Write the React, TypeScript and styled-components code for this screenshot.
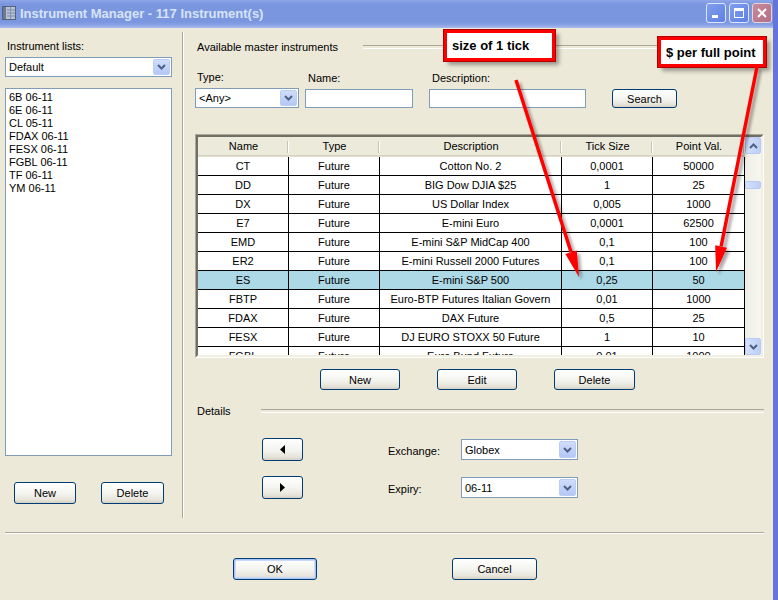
import React from 'react';
import styled, { createGlobalStyle } from 'styled-components';

const GlobalStyle = createGlobalStyle`
  html, body {
    margin: 0;
    padding: 0;
    background: #ece9d8;
    overflow: hidden;
  }
  body {
    font-family: "Liberation Sans", Arial, sans-serif;
    font-size: 11px;
    color: #000;
  }
  * {
    box-sizing: border-box;
  }
`;

const COLS = '91px 91px 182px 91px 92px';

const instruments = [
  ['CT', 'Future', 'Cotton No. 2', '0,0001', '50000'],
  ['DD', 'Future', 'BIG Dow DJIA $25', '1', '25'],
  ['DX', 'Future', 'US Dollar Index', '0,005', '1000'],
  ['E7', 'Future', 'E-mini Euro', '0,0001', '62500'],
  ['EMD', 'Future', 'E-mini S&P MidCap 400', '0,1', '100'],
  ['ER2', 'Future', 'E-mini Russell 2000 Futures', '0,1', '100'],
  ['ES', 'Future', 'E-mini S&P 500', '0,25', '50'],
  ['FBTP', 'Future', 'Euro-BTP Futures Italian Govern', '0,01', '1000'],
  ['FDAX', 'Future', 'DAX Future', '0,5', '25'],
  ['FESX', 'Future', 'DJ EURO STOXX 50 Future', '1', '10'],
  ['FGBL', 'Future', 'Euro Bund Future', '0,01', '1000'],
];

const lists = ['6B 06-11', '6E 06-11', 'CL 05-11', 'FDAX 06-11', 'FESX 06-11', 'FGBL 06-11', 'TF 06-11', 'YM 06-11'];

const Window = styled.div`
  position: relative;
  width: 778px;
  height: 600px;
  background: #ece9d8;
  border-right: 5px solid #6474d9;
  display: flex;
  flex-direction: column;
  overflow: hidden;
`;

const TitleBar = styled.div`
  height: 28px;
  flex: none;
  display: flex;
  align-items: center;
  padding: 0 1px 2px 2px;
  background: linear-gradient(
    to bottom,
    #8fa7e7 0,
    #7a96df 4px,
    #7a96df 22px,
    #8aa3e4 25px,
    #a9bcec 28px
  );
`;

const TitleText = styled.span`
  margin-left: 4px;
  font: bold 13px "Liberation Sans", Arial, sans-serif;
  color: #d8e3f8;
  white-space: nowrap;
`;

const CaptionButtons = styled.div`
  margin-left: auto;
  display: flex;
  gap: 3px;
`;

const CaptionButton = styled.div<{ $close?: boolean }>`
  width: 20px;
  height: 20px;
  border: 1px solid ${(p) => (p.$close ? '#e6d3da' : '#dde6fb')};
  border-radius: 3px;
  background: ${(p) =>
    p.$close
      ? 'linear-gradient(135deg, #c98a9c, #b17084)'
      : 'linear-gradient(135deg, #7f9ff0, #5f80e0)'};
  display: flex;
  align-items: center;
  justify-content: center;
`;

const Body = styled.div`
  height: 504px;
  flex: none;
  display: flex;
`;

const LeftPane = styled.div`
  width: 182px;
  padding-left: 5px;
  display: flex;
  flex-direction: column;
`;

const Label = styled.div<{ $mt?: number; $pl?: number }>`
  margin-top: ${(p) => p.$mt ?? 0}px;
  padding-left: ${(p) => p.$pl ?? 0}px;
  height: 13px;
  line-height: 13px;
  white-space: nowrap;
`;

const ComboBox = styled.div<{ $w: number; $h?: number; $mt?: number }>`
  width: ${(p) => p.$w}px;
  height: ${(p) => p.$h ?? 20}px;
  margin-top: ${(p) => p.$mt ?? 0}px;
  border: 1px solid #7f9db9;
  background: #fff;
  display: flex;
  align-items: center;
  padding: 1px 1px 1px 3px;
`;

const ComboValue = styled.span`
  flex: 1;
  white-space: nowrap;
`;

const DropButton = styled.div`
  width: 17px;
  height: 100%;
  border: 1px solid #bccdf5;
  border-radius: 2px;
  background: linear-gradient(to bottom, #d0dcfb, #b4c8f6);
  display: flex;
  align-items: center;
  justify-content: center;
`;

const TextBox = styled.div<{ $w: number }>`
  width: ${(p) => p.$w}px;
  height: 19px;
  border: 1px solid #7f9db9;
  background: #fff;
`;

const ListBox = styled.div`
  margin-top: 11px;
  width: 167px;
  height: 368px;
  border: 1px solid #7f9db9;
  background: #fff;
  padding: 2px 3px;
`;

const ListItem = styled.div`
  height: 13px;
  line-height: 13px;
  white-space: nowrap;
`;

const ButtonRow = styled.div<{ $mt: number; $pl: number; $gap: number }>`
  margin-top: ${(p) => p.$mt}px;
  padding-left: ${(p) => p.$pl}px;
  display: flex;
  gap: ${(p) => p.$gap}px;
`;

const XpButton = styled.button<{ $w: number; $h?: number; $default?: boolean }>`
  width: ${(p) => p.$w}px;
  height: ${(p) => p.$h ?? 22}px;
  padding: 0;
  border: 1px solid #003c74;
  border-radius: 3px;
  background: linear-gradient(to bottom, #ffffff 0%, #f3f3ee 55%, #e6e4da 85%, #d6d0c5 100%);
  font: 11px "Liberation Sans", Arial, sans-serif;
  color: #000;
  display: flex;
  align-items: center;
  justify-content: center;
  box-shadow: ${(p) =>
    p.$default ? 'inset 0 0 0 1px #a9c4f4, inset 0 0 0 2px #c9dafa' : 'none'};
`;

const VSep = styled.div`
  margin-top: 4px;
  width: 2px;
  height: 486px;
  border-left: 1px solid #aca899;
  border-right: 1px solid #fff;
`;

const RightPane = styled.div`
  flex: 1;
  padding-left: 11px;
  display: flex;
  flex-direction: column;
`;

const GroupHeader = styled.div<{ $mt: number; $line: number }>`
  margin-top: ${(p) => p.$mt}px;
  width: 569px;
  height: 13px;
  display: flex;
  align-items: center;
  padding-left: 2px;

  &::after {
    content: '';
    margin-left: auto;
    width: ${(p) => p.$line}px;
    height: 2px;
    border-top: 1px solid #aca899;
    border-bottom: 1px solid #fff;
  }
`;

const FilterRow = styled.div`
  margin-top: 18px;
  display: flex;
  align-items: flex-end;
`;

const Field = styled.div<{ $ml?: number }>`
  margin-left: ${(p) => p.$ml ?? 0}px;
  display: flex;
  flex-direction: column;
  gap: 4px;
`;

const TableFrame = styled.div`
  margin-top: 26px;
  width: 569px;
  height: 224px;
  border: 1px solid;
  border-color: #aca899 #fff #fff #aca899;
`;

const TableInner = styled.div`
  height: 100%;
  border: 2px solid;
  border-color: #716f64 #f1efe2 #f1efe2 #716f64;
  display: flex;
  background: #fff;
`;

const Grid = styled.div`
  width: 547px;
  overflow: hidden;
`;

const HeaderRow = styled.div`
  display: grid;
  grid-template-columns: ${COLS};
  height: 20px;
  background: #ebeadb;
  box-shadow: inset 0 -1px #e2decd, inset 0 -2px #d6d2c2;
`;

const HeaderCell = styled.div`
  line-height: 19px;
  text-align: center;
  white-space: nowrap;
  background:
    linear-gradient(#c7c5b2, #c7c5b2) right 1px top 4px / 1px 12px no-repeat,
    linear-gradient(#fff, #fff) right 0 top 4px / 1px 12px no-repeat;
`;

const DataRow = styled.div<{ $selected?: boolean }>`
  display: grid;
  grid-template-columns: ${COLS};
  height: 19px;
  border-bottom: 1px solid #000;
  background: ${(p) => (p.$selected ? '#add8e6' : '#fff')};
`;

const Cell = styled.div`
  border-right: 1px solid #000;
  line-height: 18px;
  text-align: center;
  white-space: nowrap;
  overflow: hidden;
  padding: 0 2px;
`;

const ScrollBar = styled.div`
  width: 16px;
  display: flex;
  flex-direction: column;
  background: linear-gradient(to right, #eeede5, #f7f6f1);
`;

const ScrollButton = styled.div<{ $h?: number }>`
  height: ${(p) => p.$h ?? 17}px;
  width: 16px;
  flex: none;
  border: 1px solid #b9cbf4;
  border-radius: 2px;
  background: linear-gradient(to right, #d4e0fc, #bccff8);
  display: flex;
  align-items: center;
  justify-content: center;
`;

const ScrollTrack = styled.div`
  flex: 1;
  padding-top: 27px;
`;

const DetailsRow = styled.div<{ $mt: number }>`
  margin-top: ${(p) => p.$mt}px;
  padding-left: 67px;
  display: flex;
  align-items: center;
`;

const DetailLabel = styled.div`
  margin-left: 85px;
  width: 73px;
  padding-top: 3px;
`;

const HSep = styled.div`
  margin-left: 5px;
  width: 759px;
  height: 2px;
  border-top: 1px solid #aca899;
  border-bottom: 1px solid #fff;
`;

const Callout = styled.div<{ $x: number; $y: number; $w: number; $h: number }>`
  position: absolute;
  left: ${(p) => p.$x}px;
  top: ${(p) => p.$y}px;
  width: ${(p) => p.$w}px;
  height: ${(p) => p.$h}px;
  background: #fff;
  border: 3px solid #ff0000;
  outline: 1px solid #b00000;
  box-shadow: 4px 4px 4px rgba(0, 0, 0, 0.35);
  font: bold 13px "Liberation Sans", Arial, sans-serif;
  color: #000;
  display: flex;
  align-items: center;
  padding-left: 5px;
  white-space: nowrap;
`;

const Overlay = styled.svg`
  position: absolute;
  left: 0;
  top: 0;
  pointer-events: none;
`;

const Chevron = ({ up }: { up?: boolean }) => (
  <svg width="9" height="6" viewBox="0 0 9 6">
    <path
      d={up ? 'M1 5 L4.5 1.5 L8 5' : 'M1 1 L4.5 4.5 L8 1'}
      stroke="#4d6185"
      strokeWidth="2"
      fill="none"
    />
  </svg>
);

const Combo = ({ w, value, mt, h }: { w: number; value: string; mt?: number; h?: number }) => (
  <ComboBox $w={w} $mt={mt} $h={h}>
    <ComboValue>{value}</ComboValue>
    <DropButton>
      <Chevron />
    </DropButton>
  </ComboBox>
);

const Triangle = ({ left }: { left?: boolean }) => (
  <svg width="5" height="9" viewBox="0 0 5 9">
    <path d={left ? 'M5 0 L0 4.5 L5 9 Z' : 'M0 0 L5 4.5 L0 9 Z'} fill="#000" />
  </svg>
);

const TitleIcon = () => (
  <svg width="14" height="16" viewBox="0 0 14 16">
    <rect x="0.5" y="1.5" width="13" height="13" fill="#b7c3d6" stroke="#55607a" />
    <rect x="1" y="2" width="3" height="12" fill="#6d7892" />
    <path d="M5 5 H13 M5 8 H13 M5 11 H13" stroke="#7b88a4" />
    <path d="M8.5 2 V14" stroke="#8a96b0" />
  </svg>
);

const Arrow = ({ x1, y1, tip, base }: { x1: number; y1: number; tip: [number, number]; base: [number, number][] }) => {
  const bx = (base[0][0] + base[1][0]) / 2;
  const by = (base[0][1] + base[1][1]) / 2;
  return (
    <g filter="url(#shadow)">
      <line x1={x1} y1={y1} x2={bx} y2={by} stroke="#ff0000" strokeWidth="3.5" />
      <polygon
        points={`${tip[0]},${tip[1]} ${base[0][0]},${base[0][1]} ${base[1][0]},${base[1][1]}`}
        fill="#ff0000"
      />
    </g>
  );
};

export default function App() {
  return (
    <>
      <GlobalStyle />
      <Window>
        <TitleBar>
          <TitleIcon />
          <TitleText>Instrument Manager - 117 Instrument(s)</TitleText>
          <CaptionButtons>
            <CaptionButton>
              <svg width="12" height="12" viewBox="0 0 12 12">
                <rect x="2" y="8" width="6" height="3" fill="#fff" />
              </svg>
            </CaptionButton>
            <CaptionButton>
              <svg width="12" height="12" viewBox="0 0 12 12">
                <rect x="1.5" y="1.5" width="9" height="9" fill="none" stroke="#fff" />
                <rect x="1" y="1" width="10" height="3" fill="#fff" />
              </svg>
            </CaptionButton>
            <CaptionButton $close>
              <svg width="12" height="12" viewBox="0 0 12 12">
                <path d="M2 2 L10 10 M10 2 L2 10" stroke="#fff" strokeWidth="2" />
              </svg>
            </CaptionButton>
          </CaptionButtons>
        </TitleBar>

        <Body>
          <LeftPane>
            <Label $mt={12} $pl={2}>Instrument lists:</Label>
            <Combo w={167} value="Default" mt={4} />
            <ListBox>
              {lists.map((item) => (
                <ListItem key={item}>{item}</ListItem>
              ))}
            </ListBox>
            <ButtonRow $mt={26} $pl={9} $gap={25}>
              <XpButton $w={62}>New</XpButton>
              <XpButton $w={63}>Delete</XpButton>
            </ButtonRow>
          </LeftPane>

          <VSep />

          <RightPane>
            <GroupHeader $mt={12} $line={401}>Available master instruments</GroupHeader>

            <FilterRow>
              <Field>
                <Label $pl={2}>Type:</Label>
                <Combo w={104} value="<Any>" />
              </Field>
              <Field $ml={6}>
                <Label $pl={3}>Name:</Label>
                <TextBox $w={108} />
              </Field>
              <Field $ml={16}>
                <Label $pl={3}>Description:</Label>
                <TextBox $w={157} />
              </Field>
              <Field $ml={26}>
                <XpButton $w={65} $h={19}>Search</XpButton>
              </Field>
            </FilterRow>

            <TableFrame>
              <TableInner>
                <Grid>
                  <HeaderRow>
                    {['Name', 'Type', 'Description', 'Tick Size', 'Point Val.'].map((h) => (
                      <HeaderCell key={h}>{h}</HeaderCell>
                    ))}
                  </HeaderRow>
                  {instruments.map((row) => (
                    <DataRow key={row[0]} $selected={row[0] === 'ES'}>
                      {row.map((v, i) => (
                        <Cell key={i}>{v}</Cell>
                      ))}
                    </DataRow>
                  ))}
                </Grid>
                <ScrollBar>
                  <ScrollButton>
                    <Chevron up />
                  </ScrollButton>
                  <ScrollTrack>
                    <ScrollButton $h={8} />
                  </ScrollTrack>
                  <ScrollButton>
                    <Chevron />
                  </ScrollButton>
                </ScrollBar>
              </TableInner>
            </TableFrame>

            <ButtonRow $mt={11} $pl={125} $gap={37}>
              <XpButton $w={80} $h={21}>New</XpButton>
              <XpButton $w={80} $h={21}>Edit</XpButton>
              <XpButton $w={81} $h={21}>Delete</XpButton>
            </ButtonRow>

            <GroupHeader $mt={14} $line={503}>Details</GroupHeader>

            <DetailsRow $mt={21}>
              <XpButton $w={41} $h={23}>
                <Triangle left />
              </XpButton>
              <DetailLabel>Exchange:</DetailLabel>
              <Combo w={117} h={21} value="Globex" />
            </DetailsRow>
            <DetailsRow $mt={15}>
              <XpButton $w={41} $h={23}>
                <Triangle />
              </XpButton>
              <DetailLabel>Expiry:</DetailLabel>
              <Combo w={117} h={21} value="06-11" />
            </DetailsRow>
          </RightPane>
        </Body>

        <HSep />

        <ButtonRow $mt={24} $pl={233} $gap={135}>
          <XpButton $w={84} $default>OK</XpButton>
          <XpButton $w={85}>Cancel</XpButton>
        </ButtonRow>

        <Callout $x={444} $y={30} $w={111} $h={31}>size of 1 tick</Callout>
        <Callout $x={658} $y={37} $w={108} $h={30}>$ per full point</Callout>

        <Overlay width="778" height="600" viewBox="0 0 778 600">
          <defs>
            <filter id="shadow" x="-20%" y="-20%" width="140%" height="140%">
              <feDropShadow dx="3" dy="3" stdDeviation="1.5" floodColor="#000" floodOpacity="0.35" />
            </filter>
          </defs>
          <Arrow x1={516} y1={80} tip={[579, 277]} base={[[576.8, 250.4], [565.4, 254.0]]} />
          <Arrow x1={757} y1={67} tip={[716, 272]} base={[[727, 247.7], [715.2, 245.3]]} />
        </Overlay>
      </Window>
    </>
  );
}
